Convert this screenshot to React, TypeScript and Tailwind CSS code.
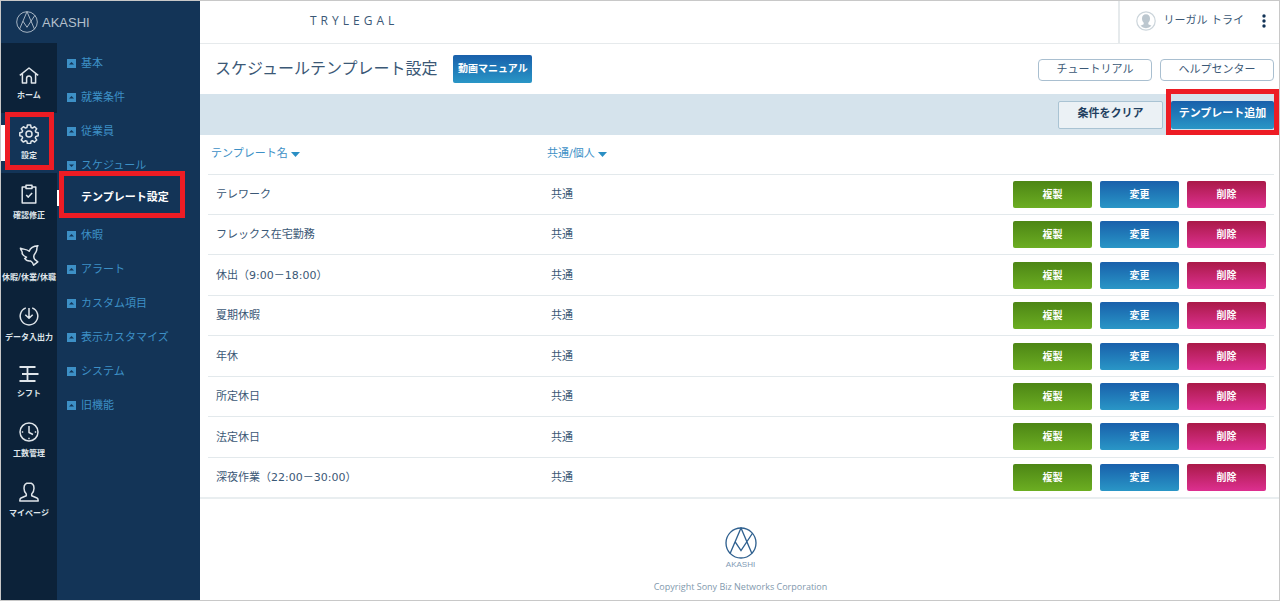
import type { ReactNode } from 'react';
import clsx from 'clsx';

const templates = [
  { name: 'テレワーク', scope: '共通' },
  { name: 'フレックス在宅勤務', scope: '共通' },
  { name: '休出（9:00－18:00）', scope: '共通' },
  { name: '夏期休暇', scope: '共通' },
  { name: '年休', scope: '共通' },
  { name: '所定休日', scope: '共通' },
  { name: '法定休日', scope: '共通' },
  { name: '深夜作業（22:00－30:00）', scope: '共通' },
];

const menu: { label: string; children?: string[] }[] = [
  { label: '基本' },
  { label: '就業条件' },
  { label: '従業員' },
  { label: 'スケジュール', children: ['テンプレート設定'] },
  { label: '休暇' },
  { label: 'アラート' },
  { label: 'カスタム項目' },
  { label: '表示カスタマイズ' },
  { label: 'システム' },
  { label: '旧機能' },
];

function Icon({ height, children }: { height: number; children: ReactNode }) {
  return (
    <svg
      width="20"
      height={height}
      viewBox={`0 0 20 ${height}`}
      fill="none"
      stroke="currentColor"
      strokeWidth="1.5"
      strokeLinejoin="round"
      aria-hidden="true"
    >
      {children}
    </svg>
  );
}

const rail = [
  {
    label: 'ホーム',
    icon: (
      <Icon height={17}>
        <path d="M0.8 8.4 10 1l9.2 7.4M3.4 6.6V16h4.2v-4.6a2.4 2.4 0 0 1 4.8 0V16h4.2V6.6" />
      </Icon>
    ),
  },
  {
    label: '設定',
    active: true,
    icon: (
      <Icon height={20}>
        <circle cx="10" cy="10" r="3" />
        <path d="M8.4 1h3.2l.5 2.5 1.4.6 2.1-1.4 2.1 2.1-1.4 2.1.6 1.4 2.3.5v3l-2.3.6-.6 1.4 1.4 2.1-2.1 2.2-2.1-1.4-1.4.6-.5 2.3H8.4l-.5-2.3-1.4-.6-2.1 1.4-2.2-2.2 1.4-2.1-.6-1.4L.8 11.8v-3L3 8.3l.6-1.4-1.4-2.1 2.2-2.1 2.1 1.4 1.4-.6z" />
      </Icon>
    ),
  },
  {
    label: '確認修正',
    icon: (
      <Icon height={20}>
        <path d="M7 3H3.2v16h13.6V3H13M7 1.2h6v3.4H7zM7.2 11l2.1 2.1 3.8-4" />
      </Icon>
    ),
  },
  {
    label: '休暇/休業/休職',
    icon: (
      <Icon height={22}>
        <path d="M1.4 4.2c2.800 1.300 6 .6 8.800 3C11.200 4.200 14.500 2 19 1.700c-1.500 1-1 2.800-1.300 4.500-.4 2-1.500 3.300-2.500 4.600-.7 1.800-.6 3.400.8 4.900l2.800 2.100-4.200 3.300c-.5-2-1.500-3.300-3.100-4.200-2.400.3-4.600-.6-5.800-2.500.8-.2 1.400-.6 1.800-1.300-2.200-.6-3.800-2-4.400-3.900.8-1.800-1.400-2.700-1.700-5z" />
      </Icon>
    ),
  },
  {
    label: 'データ入出力',
    icon: (
      <Icon height={20}>
        <path d="M6.8 1.9a8.800 8.800 0 1 0 6.4 0M10 2v10M6.300 8.700 10 12.300l3.700-3.600" />
      </Icon>
    ),
  },
  {
    label: 'シフト',
    icon: (
      <Icon height={16}>
        <path d="M.5 1h16M3 8h16.500M.5 15h16M8.500 1v14" strokeWidth="1.8" />
      </Icon>
    ),
  },
  {
    label: '工数管理',
    icon: (
      <Icon height={20}>
        <circle cx="10" cy="10" r="9" />
        <path d="M10 4v6.500l4 2M2.800 10h1.400M15.800 10h1.400M10 15.800v1.400" />
      </Icon>
    ),
  },
  {
    label: 'マイページ',
    icon: (
      <Icon height={20}>
        <path d="M10 1C6.700 1 5 3.300 5 6.200c0 2.200.8 4.300 2.300 5.800v1.800L2 16c-.9.400-1.200 1.200-1.200 3h18.400c0-1.800-.3-2.600-1.200-3l-5.300-2.200V12C14.200 10.500 15 8.400 15 6.200 15 3.300 13.300 1 10 1z" />
      </Icon>
    ),
  },
];

function LogoMark({ className }: { className?: string }) {
  return (
    <svg viewBox="0 0 96 96" fill="none" stroke="currentColor" strokeWidth="4" className={className} aria-hidden="true">
      <circle cx="48" cy="48" r="45" />
      <path d="M15 80 48 3l33 77M30 44l18 27 35-53" />
    </svg>
  );
}

/** Red frame drawn around whatever the manual points at. */
function Highlight({ className }: { className: string }) {
  return <span className={clsx('pointer-events-none absolute z-10 border-[#ed1c24]', className)} />;
}

function Sidebar() {
  return (
    <aside className="flex w-[199px] shrink-0 flex-col bg-[#133457]">
      <a href="#" className="flex h-[42px] items-center gap-1 pl-[15px] text-[13px] text-[#b4c0cc]">
        <LogoMark className="h-[22px] w-[22px]" />
        <span className="pt-[2px] font-['Liberation_Sans',sans-serif]">AKASHI</span>
      </a>
      <div className="flex grow">
        <nav className="w-14 shrink-0 bg-[#0c2239] pt-[13px]">
          {rail.map((item) => (
            <a
              key={item.label}
              href="#"
              className={clsx(
                'relative flex flex-col items-center pt-[11px] pb-[11px] text-[#dfe5ea]',
                item.active && 'bg-[#133457]',
              )}
            >
              {item.active && <span className="absolute top-3 left-0 h-9 w-1 bg-white" />}
              {item.icon}
              <span className="mt-[6px] text-[8px] leading-3 font-bold whitespace-nowrap">{item.label}</span>
              {item.active && <Highlight className="-top-px right-[3px] bottom-[3px] left-1 border-[5px]" />}
            </a>
          ))}
        </nav>
        <nav className="grow pt-[3px] text-[11px]">
          {menu.map((item) => (
            <div key={item.label}>
              <a href="#" className="flex h-[34px] items-center gap-[5px] pl-[10px] text-[#3d90c6]">
                <svg width="9" height="9" viewBox="0 0 9 9" className="shrink-0" aria-hidden="true">
                  <rect width="9" height="9" fill="currentColor" />
                  <path d={item.children ? 'M2 3.5h5L4.5 6z' : 'M2 5.5h5L4.5 3z'} fill="#133457" />
                </svg>
                <span className="pt-[2px]">{item.label}</span>
              </a>
              {item.children?.map((child) => (
                <a key={child} href="#" className="relative mb-1 flex h-8 items-center pl-6 font-bold text-white">
                  <span className="absolute top-2 left-0 h-4 w-[3px] bg-white" />
                  {child}
                  <Highlight className="-top-[11px] right-[15px] -bottom-1 left-[2px] border-[5px]" />
                </a>
              ))}
            </div>
          ))}
        </nav>
      </div>
    </aside>
  );
}

function SortButton({ children }: { children: ReactNode }) {
  return (
    <button type="button" className="flex items-center gap-[3px]">
      {children}
      <svg width="9" height="5" viewBox="0 0 9 5" aria-hidden="true">
        <path d="M0 0h9L4.5 5z" fill="#2a8fc4" />
      </svg>
    </button>
  );
}

const actions = [
  { label: '複製', className: 'from-[#4d8615] to-[#6cae22]' },
  { label: '変更', className: 'from-[#1a60ab] to-[#2a96c6]' },
  { label: '削除', className: 'from-[#aa1948] to-[#dd2f90]' },
];

export default function App() {
  return (
    <div className="flex min-h-screen border border-[#c8c8c8] bg-white font-['DejaVu_Sans','Noto_Sans_CJK_JP',sans-serif] text-[11px] text-[#3b5876]">
      <Sidebar />
      <main className="flex min-w-0 grow flex-col">
        <header className="flex h-[43px] items-stretch border-b border-[#e6eaec]">
          <p className="grow pt-3 pl-[110px] font-['Open_Sans',sans-serif] text-xs leading-4 tracking-[4px]">TRYLEGAL</p>
          <div className="flex items-center border-l-2 border-[#e6eaec] pr-[11px] pb-[2px] pl-4">
            <svg width="20" height="20" viewBox="0 0 20 20" aria-hidden="true">
              <circle cx="10" cy="10" r="9.200" fill="#fff" stroke="#ccd5db" strokeWidth="1.200" />
              <path
                d="M10 3.300c-2.700 0-4 1.700-4 4.200 0 1.800.6 3.200 1.700 4.200v1.500l-3.200 1.600a7.600 7.600 0 0 0 11 0l-3.200-1.600v-1.500c1.100-1 1.700-2.400 1.700-4.200 0-2.500-1.300-4.200-4-4.200z"
                fill="#bcc7cf"
              />
            </svg>
            <span className="ml-2">リーガル トライ</span>
            <button type="button" aria-label="メニュー" className="ml-4 text-[#133457]">
              <svg width="8" height="14" viewBox="0 0 8 14" fill="currentColor" aria-hidden="true">
                <circle cx="4" cy="2" r="1.700" />
                <circle cx="4" cy="7" r="1.700" />
                <circle cx="4" cy="12" r="1.700" />
              </svg>
            </button>
          </div>
        </header>

        <div className="flex h-[50px] items-center pr-[5px] pl-[15px]">
          <h1 className="text-base">スケジュールテンプレート設定</h1>
          <button
            type="button"
            className="ml-4 h-7 w-[79px] rounded-xs bg-linear-to-b from-[#1a60ab] to-[#2a96c6] pb-[2px] text-[10px] font-bold text-white"
          >
            動画マニュアル
          </button>
          <div className="ml-auto flex gap-2 pt-[2px]">
            {['チュートリアル', 'ヘルプセンター'].map((label) => (
              <button key={label} type="button" className="h-[22px] w-[114px] rounded-sm border border-[#a9bfd0]">
                {label}
              </button>
            ))}
          </div>
        </div>

        <div className="flex h-[41px] items-center justify-end gap-2 bg-[#d5e3ec] pr-[5px] font-bold">
          <button type="button" className="h-7 w-[105px] rounded-xs border border-[#a9c3d3] bg-[#ebf1f5] text-[#1f3f60]">
            条件をクリア
          </button>
          <div className="relative">
            <button type="button" className="h-7 w-[103px] rounded-xs bg-linear-to-b from-[#1a60ab] to-[#2a96c6] text-white">
              テンプレート追加
            </button>
            <Highlight className="-top-3 -right-[5px] -bottom-[6px] -left-[5px] border-[5px]" />
          </div>
        </div>

        <div className="flex grow flex-col border-b-2 border-[#e9eef0] pr-[5px] pl-2">
          <table className="w-full grow border-collapse text-left">
            <thead>
              <tr className="h-[39px] text-[#3d90c6]">
                <th className="w-[335px] pl-[3px] font-normal">
                  <SortButton>テンプレート名</SortButton>
                </th>
                <th className="pl-1 font-normal">
                  <SortButton>共通/個人</SortButton>
                </th>
                <th aria-label="操作" />
              </tr>
            </thead>
            <tbody>
              {templates.map((template) => (
                <tr key={template.name} className="border-t border-[#e3e9ec]">
                  <td className="pt-[2px] pl-2">{template.name}</td>
                  <td className="pt-[2px] pl-2">{template.scope}</td>
                  <td className="pr-2">
                    <div className="flex justify-end gap-2">
                      {actions.map((action) => (
                        <button
                          key={action.label}
                          type="button"
                          className={clsx(
                            'h-[27px] w-[79px] rounded-xs bg-linear-to-b text-[10px] font-bold text-white',
                            action.className,
                          )}
                        >
                          {action.label}
                        </button>
                      ))}
                    </div>
                  </td>
                </tr>
              ))}
            </tbody>
          </table>
        </div>

        <footer className="flex h-[101px] flex-col items-center pt-7 pl-[2px]">
          <LogoMark className="h-8 w-8 text-[#2f608f]" />
          <span className="mt-px font-['Liberation_Sans',sans-serif] text-[8px] leading-[10px] text-[#7f9bb5]">
            AKASHI
          </span>
          <p className="mt-[9px] font-['Open_Sans',sans-serif] text-[9px] leading-4 text-[#8299ad]">
            Copyright Sony Biz Networks Corporation
          </p>
        </footer>
      </main>
    </div>
  );
}
